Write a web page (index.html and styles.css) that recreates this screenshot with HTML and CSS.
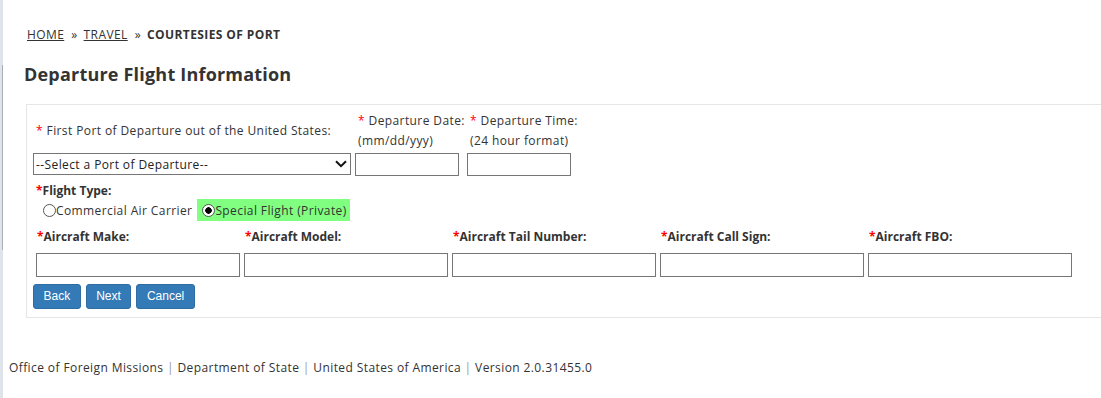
FILE: index.html
```html
<!DOCTYPE html>
<html lang="en">
<head>
<meta charset="utf-8">
<title>Departure Flight Information</title>
<link rel="stylesheet" href="styles.css">
</head>
<body>
<div class="rail"><div class="rail-line"></div></div>
<div class="content">
  <main class="main">
    <nav class="crumbs">
      <a href="#" class="crumb-link">HOME</a><span class="crumb-sep">»</span><a href="#" class="crumb-link">TRAVEL</a><span class="crumb-sep">»</span><span class="crumb-current">COURTESIES OF PORT</span>
    </nav>
    <h1 class="title">Departure Flight Information</h1>
    <section class="panel">
      <div class="row-top">
        <div class="field field-port">
          <div class="label-box"><span class="label"><span class="req">*</span> First Port of Departure out of the United States:</span></div>
          <div class="select-wrap">
            <select class="select"><option>--Select a Port of Departure--</option></select>
            <svg class="chevron" width="12" height="8" viewBox="0 0 12 8"><path d="M1 1.2 L6 6.2 L11 1.2" fill="none" stroke="#111" stroke-width="2"/></svg>
          </div>
        </div>
        <div class="field field-date">
          <div class="label-box"><span class="label"><span class="req">*</span> Departure Date:<br>(mm/dd/yyy)</span></div>
          <input class="input input-short" type="text">
        </div>
        <div class="field field-time">
          <div class="label-box"><span class="label"><span class="req">*</span> Departure Time:<br>(24 hour format)</span></div>
          <input class="input input-short" type="text">
        </div>
      </div>

      <div class="flight-type">
        <div class="bold-label"><span class="req">*</span>Flight Type:</div>
        <div class="radios">
          <label class="radio-opt"><input type="radio" name="ft" class="radio">Commercial Air Carrier</label>
          <label class="radio-opt radio-opt-on"><input type="radio" name="ft" class="radio" checked>Special Flight (Private)</label>
        </div>
      </div>

      <div class="aircraft-row">
        <div class="ac-field"><div class="bold-label"><span class="req">*</span>Aircraft Make:</div><input class="input input-ac" type="text"></div>
        <div class="ac-field"><div class="bold-label"><span class="req">*</span>Aircraft Model:</div><input class="input input-ac" type="text"></div>
        <div class="ac-field"><div class="bold-label"><span class="req">*</span>Aircraft Tail Number:</div><input class="input input-ac" type="text"></div>
        <div class="ac-field"><div class="bold-label"><span class="req">*</span>Aircraft Call Sign:</div><input class="input input-ac" type="text"></div>
        <div class="ac-field"><div class="bold-label"><span class="req">*</span>Aircraft FBO:</div><input class="input input-ac" type="text"></div>
      </div>

      <div class="buttons">
        <button class="btn" type="button">Back</button>
        <button class="btn" type="button">Next</button>
        <button class="btn" type="button">Cancel</button>
      </div>
    </section>
  </main>
  <footer class="footer">
    Office of Foreign Missions <span class="pipe">|</span> Department of State <span class="pipe">|</span> United States of America <span class="pipe">|</span> Version 2.0.31455.0
  </footer>
</div>
</body>
</html>
```
FILE: styles.css
```css
* { box-sizing: border-box; }
html, body { margin: 0; height: 100%; }
body {
  display: flex;
  font-family: "Open Sans", "DejaVu Sans", sans-serif;
  color: #333;
  background: #fff;
  overflow: hidden;
}
.rail {
  width: 3px;
  flex: none;
  background: #dfe4eb;
  display: flex;
}
.rail-line {
  width: 1px;
  margin-left: 2px;
  margin-top: 65px;
  height: 185px;
  background: #a9aeb4;
}
.content {
  flex: 1;
  min-width: 0;
  display: flex;
  flex-direction: column;
}
.main { padding-left: 21px; }

.crumbs {
  margin: 27px 0 0 3px;
  font-size: 12px;
  line-height: 16px;
  letter-spacing: 0.4px;
  display: flex;
  white-space: nowrap;
}
.crumb-link { color: #333; text-decoration: underline; }
.crumb-sep { margin: 0 6px 0 7px; }
.crumb-current { font-weight: bold; }

.title {
  margin: 19px 0 0 0;
  font-size: 18px;
  line-height: 24px;
  font-weight: bold;
  letter-spacing: 0.2px;
  color: #333;
}

.panel {
  margin: 18px 0 0 2px;
  width: 1100px;
  border: 1px solid #e6e6e6;
  padding: 4px 0 8px 6px;
  font-size: 12px;
  letter-spacing: 0.4px;
}

.row-top { display: flex; }
.field { display: flex; flex-direction: column; }
.field-port { width: 322px; }
.field-date { width: 112px; }
.field-time { width: 104px; }
.label-box {
  height: 44px;
  display: flex;
  align-items: center;
  padding-left: 3px;
}
.label { line-height: 20px; white-space: nowrap; margin-top: -1px; }
.req { color: #f00; }

.select-wrap { position: relative; width: 318px; height: 22px; }
.select {
  appearance: none;
  -webkit-appearance: none;
  width: 100%;
  height: 22px;
  border: 1px solid #767676;
  border-radius: 0;
  background: #fff;
  font-family: inherit;
  font-size: 12px;
  letter-spacing: 0.4px;
  color: #222;
  padding: 0 0 0 2px;
}
.chevron { position: absolute; right: 4px; top: 7px; pointer-events: none; }
.input {
  border: 1px solid #767676;
  border-radius: 0;
  background: #fff;
  font-family: inherit;
  font-size: 12px;
  padding: 0 3px;
}
.input-short { width: 104px; height: 23px; }

.flight-type { margin-top: 7px; }
.bold-label {
  font-weight: bold;
  line-height: 16px;
  letter-spacing: 0;
  white-space: nowrap;
  padding-left: 3px;
}
.radios {
  display: flex;
  align-items: center;
  height: 22px;
  padding-left: 10px;
}
.radio-opt { display: flex; align-items: center; height: 22px; }
.radio-opt-on {
  background: #80ff80;
  margin-left: 5px;
  padding: 0 3px 0 5px;
}
.radio {
  appearance: none;
  -webkit-appearance: none;
  width: 13px;
  height: 13px;
  margin: 0;
  border: 1px solid #555;
  border-radius: 50%;
  background: #fff;
  flex: none;
}
.radio:checked {
  background: radial-gradient(circle, #000 0 3px, #fff 3.5px);
}

.aircraft-row { display: flex; margin-top: 8px; padding-left: 3px; }
.ac-field { width: 208px; display: flex; flex-direction: column; }
.ac-field .bold-label { padding-left: 1px; }
.input-ac { width: 204px; height: 24px; margin-top: 8px; }

.buttons { display: flex; gap: 5px; margin-top: 7px; }
.btn {
  font-family: "Liberation Sans", Arial, sans-serif;
  font-size: 12px;
  line-height: 15px;
  letter-spacing: 0;
  color: #fff;
  background: #337ab7;
  border: 1px solid #2e6da4;
  border-radius: 3px;
  padding: 4px 9.5px;
}

.footer {
  margin-top: 42px;
  padding-left: 6px;
  font-size: 12px;
  line-height: 16px;
  letter-spacing: 0.4px;
  white-space: nowrap;
}
.pipe { color: #999; }
```
